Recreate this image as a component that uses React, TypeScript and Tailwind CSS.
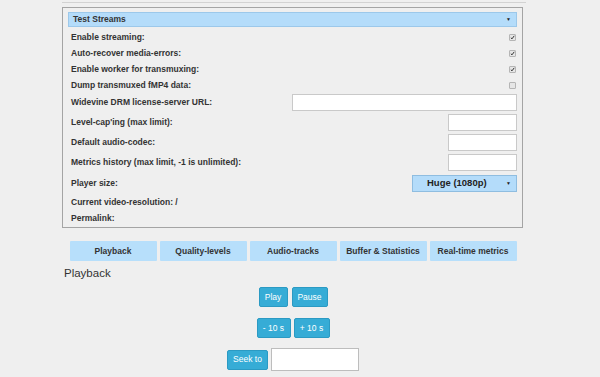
import React from "react";

const Check = ({ on }: { on: boolean }) => (
  <div className="w-[7px] h-[7px] rounded-[1px] border border-[#b5b5b5] bg-[#e6e6e6] flex items-center justify-center">
    {on && (
      <svg width="7" height="7" viewBox="0 0 7 7" className="block">
        <path d="M1.2 3.8 L2.8 5.4 L5.9 1.2" stroke="#333" strokeWidth="1.4" fill="none" />
      </svg>
    )}
  </div>
);

const Label = ({ children }: { children: React.ReactNode }) => (
  <span className="text-[8.5px] font-bold text-[#333] leading-none">{children}</span>
);

const btn =
  "h-[20px] bg-[#36acd6] border border-[#2b9ac3] rounded-[2px] text-white text-[8.5px] leading-none";

export default function App() {
  const tabs = ["Playback", "Quality-levels", "Audio-tracks", "Buffer & Statistics", "Real-time metrics"];
  return (
    <div
      className="w-[600px] h-[377px] bg-[#efefef] overflow-hidden relative"
      style={{ fontFamily: '"Liberation Sans", Arial, sans-serif' }}
    >
      <div className="ml-[62px] w-[464px] h-[3px] border-b border-[#d2d2d2]" />
      <div className="ml-[62px] w-[461px] flex flex-col">
        <div className="mt-[4px] h-[221px] border border-[#a4a4a4] pt-[4px] pl-[5px] pr-[5px] pb-[2px] flex flex-col">
          <div className="h-[15px] bg-[#b4dcfa] border border-[#9cc8ea] flex items-center justify-between pl-[4px] pr-[5px]">
            <Label>Test Streams</Label>
            <span className="text-[5px] text-[#222] leading-none">▼</span>
          </div>
          <div className="mt-[2px] h-[16px] flex items-center justify-between pl-[3px] pr-[1px]">
            <Label>Enable streaming:</Label>
            <Check on />
          </div>
          <div className="h-[16px] flex items-center justify-between pl-[3px] pr-[1px]">
            <Label>Auto-recover media-errors:</Label>
            <Check on />
          </div>
          <div className="h-[16px] flex items-center justify-between pl-[3px] pr-[1px]">
            <Label>Enable worker for transmuxing:</Label>
            <Check on />
          </div>
          <div className="h-[16px] flex items-center justify-between pl-[3px] pr-[1px]">
            <Label>Dump transmuxed fMP4 data:</Label>
            <Check on={false} />
          </div>
          <div className="h-[18px] flex items-center justify-between pl-[3px]">
            <Label>Widevine DRM license-server URL:</Label>
            <div className="w-[225px] h-[17px] bg-white border border-[#c9c9c9]" />
          </div>
          <div className="mt-[1px] h-[20px] flex items-center justify-between pl-[3px]">
            <Label>Level-cap'ing (max limit):</Label>
            <div className="w-[69px] h-[17px] bg-white border border-[#c9c9c9]" />
          </div>
          <div className="h-[20px] flex items-center justify-between pl-[3px]">
            <Label>Default audio-codec:</Label>
            <div className="w-[69px] h-[17px] bg-white border border-[#c9c9c9]" />
          </div>
          <div className="h-[20px] flex items-center justify-between pl-[3px]">
            <Label>Metrics history (max limit, -1 is unlimited):</Label>
            <div className="w-[69px] h-[17px] bg-white border border-[#c9c9c9]" />
          </div>
          <div className="mt-[1px] h-[20px] flex items-center justify-between pl-[3px]">
            <Label>Player size:</Label>
            <div className="w-[105px] h-[17px] bg-[#b4dcfa] border border-[#8fbde0] flex items-center justify-between pl-[14px] pr-[5px]">
              <span className="text-[9.5px] font-bold text-[#222] leading-none">Huge (1080p)</span>
              <span className="text-[5px] text-[#222] leading-none">▼</span>
            </div>
          </div>
          <div className="h-[18px] flex items-center pl-[3px]">
            <Label>Current video-resolution: /</Label>
          </div>
          <div className="h-[14px] flex items-center pl-[3px]">
            <Label>Permalink:</Label>
          </div>
        </div>

        <div className="mt-[13px] flex justify-center gap-[3px] pl-[1px]">
          {tabs.map((t) => (
            <div
              key={t}
              className="w-[87px] h-[20px] bg-[#b7dffb] rounded-[1px] flex items-center justify-center"
            >
              <Label>{t}</Label>
            </div>
          ))}
        </div>

        <div className="mt-[6px] pl-[2px] text-[11.5px] leading-[13px] text-[#333]">Playback</div>

        <div className="mt-[7px] flex justify-center gap-[4px] pl-[1px]">
          <button className={`w-[29px] ${btn}`}>Play</button>
          <button className={`w-[36px] ${btn}`}>Pause</button>
        </div>

        <div className="mt-[11px] flex justify-center gap-[3px] pl-[1px]">
          <button className={`w-[34px] ${btn}`}>- 10 s</button>
          <button className={`w-[36px] ${btn}`}>+ 10 s</button>
        </div>

        <div className="mt-[10px] flex justify-center items-center gap-[3px] pl-[1px]">
          <button className={`w-[41px] ${btn}`}>Seek to</button>
          <div className="w-[88px] h-[23px] bg-white border border-[#bdbdbd]" />
        </div>
      </div>
    </div>
  );
}
